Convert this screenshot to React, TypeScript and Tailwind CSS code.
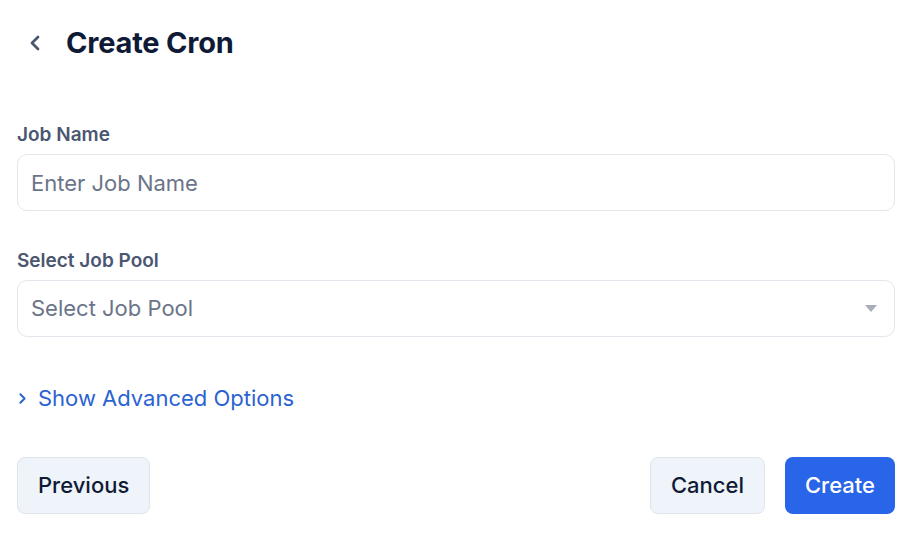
import { ChevronLeft, ChevronRight } from "lucide-react";

export default function App() {
  return (
    <div className="w-[913px] h-[536px] bg-white pl-[17px] pr-[18px] pt-[22px] font-['Inter',sans-serif] text-slate-900">
      <div className="flex items-center h-[42px]">
        <button className="w-[30px] flex items-center justify-start pl-[6px] text-[#4b5670]">
          <ChevronLeft size={24} strokeWidth={2.75} />
        </button>
        <h1 className="ml-[19px] text-[29px] font-bold tracking-[-0.2px] text-[#0f1a36]">Create Cron</h1>
      </div>

      <div className="mt-[58px] space-y-[6px]">
        <label className="block text-[19px] leading-[26px] font-semibold text-[#4b5670]">Job Name</label>
        <input
          placeholder="Enter Job Name"
          className="w-full h-[57px] rounded-[10px] border border-[#e3e6ec] px-[13px] text-[22px] placeholder:text-[#6b7489] outline-none"
        />
      </div>

      <div className="mt-[37px] space-y-[6px]">
        <label className="block text-[19px] leading-[26px] font-semibold text-[#4b5670]">Select Job Pool</label>
        <div className="w-full h-[57px] rounded-[10px] border border-[#e3e6ec] px-[13px] flex items-center justify-between">
          <span className="text-[22px] text-[#6b7489]">Select Job Pool</span>
          <svg width="14" height="9" viewBox="0 0 14 9" className="mr-[3px]">
            <path d="M1 1h12L7 8z" fill="#a9adb9" />
          </svg>
        </div>
      </div>

      <button className="mt-[47px] flex items-center gap-[7px] text-[#2b63d1]">
        <ChevronRight size={17} strokeWidth={2.75} className="-ml-[3px]" />
        <span className="text-[22px] leading-[28px]">Show Advanced Options</span>
      </button>

      <div className="mt-[45px] flex items-center justify-between">
        <button className="h-[57px] px-[20px] rounded-[8px] bg-[#eff3fa] border border-[#dfe3ea] text-[22px] font-medium text-[#0f1a36]">
          Previous
        </button>
        <div className="flex items-center gap-[20px]">
          <button className="h-[57px] px-[20px] rounded-[8px] bg-[#eff3fa] border border-[#dfe3ea] text-[22px] font-medium text-[#0f1a36]">
            Cancel
          </button>
          <button className="h-[57px] px-[20px] rounded-[8px] bg-[#2865e8] text-[22px] font-medium text-white">
            Create
          </button>
        </div>
      </div>
    </div>
  );
}
